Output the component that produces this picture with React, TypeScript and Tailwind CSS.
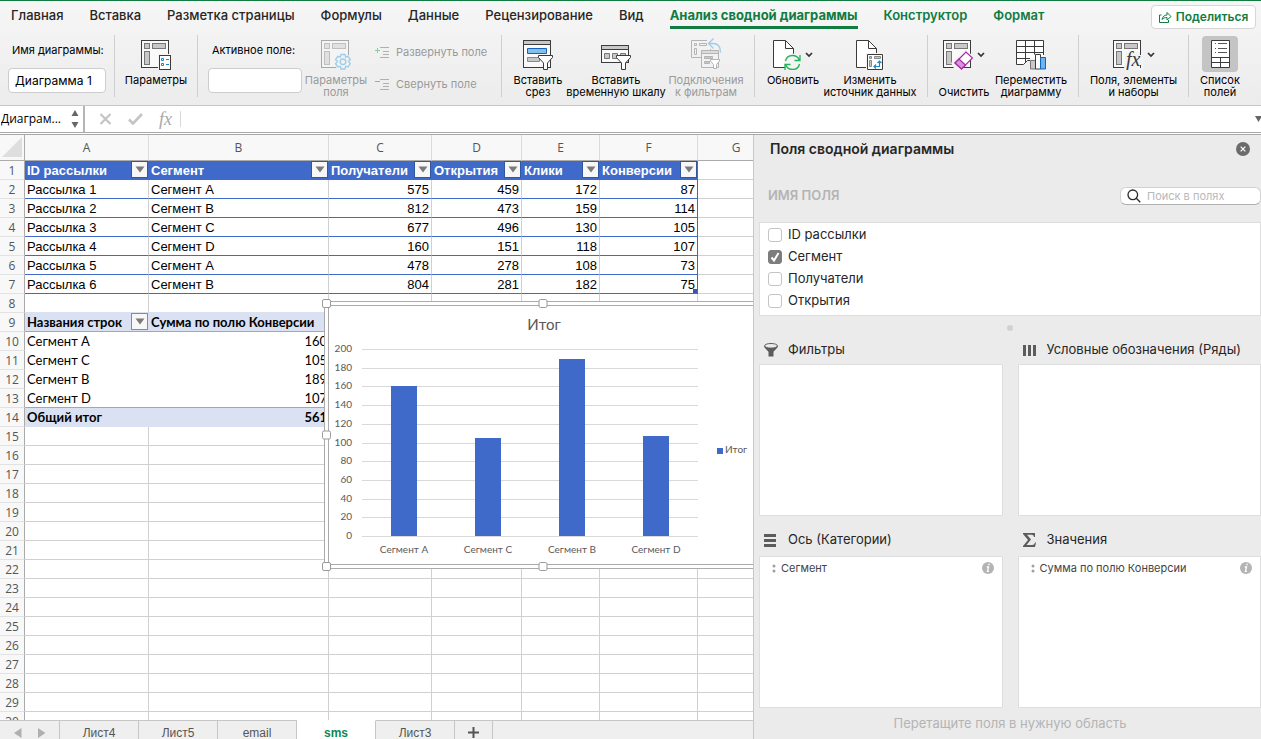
import React, { useState } from 'react';

// --- TYPE DEFINITIONS ---
type IconProps = { className?: string };

type RibbonButtonProps = {
  icon: React.ReactNode;
  lines: string[];
  width: string;
  muted?: boolean;
  menu?: boolean;
  active?: boolean;
};

// --- DATA ---
const menuTabs = ['Главная', 'Вставка', 'Разметка страницы', 'Формулы', 'Данные', 'Рецензирование', 'Вид'];
const contextTabs = ['Анализ сводной диаграммы', 'Конструктор', 'Формат'];

const columns = ['A', 'B', 'C', 'D', 'E', 'F', 'G'];
const headings = ['ID рассылки', 'Сегмент', 'Получатели', 'Открытия', 'Клики', 'Конверсии'];

const mailings = [
  ['Рассылка 1', 'Сегмент A', 575, 459, 172, 87],
  ['Рассылка 2', 'Сегмент B', 812, 473, 159, 114],
  ['Рассылка 3', 'Сегмент C', 677, 496, 130, 105],
  ['Рассылка 4', 'Сегмент D', 160, 151, 118, 107],
  ['Рассылка 5', 'Сегмент A', 478, 278, 108, 73],
  ['Рассылка 6', 'Сегмент B', 804, 281, 182, 75],
];

const pivot = [
  { name: 'Сегмент A', value: 160 },
  { name: 'Сегмент C', value: 105 },
  { name: 'Сегмент B', value: 189 },
  { name: 'Сегмент D', value: 107 },
];

const emptyRows = Array.from({ length: 16 }, (_, i) => i + 15);
const sheets = ['Лист4', 'Лист5', 'email', 'sms', 'Лист3'];
const fields = ['ID рассылки', 'Сегмент', 'Получатели', 'Открытия'];

// --- RIBBON ICONS ---
function PivotBase() {
  return (
    <>
      <rect x="0.5" y="0.5" width="27" height="27" fill="#fafafa" stroke="#3b3b3b" />
      <g fill="#c8c8c8" stroke="#777">
        <rect x="3.5" y="3.5" width="5" height="5" />
        <rect x="11.5" y="3.5" width="13" height="5" />
        <rect x="3.5" y="11.5" width="5" height="13" />
      </g>
    </>
  );
}

function OptionsIcon() {
  return (
    <svg width="30" height="30" viewBox="0 0 30 30" fill="none">
      <PivotBase />
      <path d="M17 14h13v16H17z" fill="#f4f4f4" />
      <rect x="18.5" y="15.5" width="11" height="14" fill="#fff" stroke="#3b3b3b" />
      <path d="M20.5 18.5h2v2h-2zM20.5 23.5h2v2h-2zM25 19.5h3M25 24.5h3" stroke="#1b87c9" />
    </svg>
  );
}

function FieldOptionsIcon() {
  return (
    <svg width="30" height="30" viewBox="0 0 30 30" fill="none">
      <g opacity="0.4">
        <PivotBase />
      </g>
      <circle cx="22" cy="22" r="9" fill="#f1f1f1" />
      <path
        d="M20 14.5h4l.6 2.6 2.2-.8 2.5 3.2-1.8 2 1.8 2.2-2.3 3.2-2.4-.7-.6 2.8h-4l-.8-2.8-2.4.7-2.2-3.2 1.9-2.2-1.9-2 2.2-3.2 2.4.8z"
        stroke="#9dcdea"
        strokeWidth="1.3"
      />
      <circle cx="22" cy="21.8" r="2.8" stroke="#9dcdea" strokeWidth="1.3" />
    </svg>
  );
}

function Funnel() {
  return (
    <path
      d="M15.5 15.5h14v2l-5 5.5v6.500h-4V23l-5-5.500z"
      fill="#fff"
      stroke="#3b3b3b"
      strokeLinejoin="round"
    />
  );
}

function SlicerIcon() {
  return (
    <svg width="30" height="30" viewBox="0 0 30 30" fill="none">
      <rect x="0.5" y="0.5" width="27" height="27" fill="#fafafa" stroke="#3b3b3b" />
      <path d="M.5.5h27v4H.5z" fill="#c8c8c8" stroke="#3b3b3b" />
      <path d="M4.500 8.500h19v5h-19z" fill="#83beec" stroke="#1563b5" />
      <path d="M4.500 17.500h12v4h-12z" fill="#c8c8c8" stroke="#8a8a8a" />
      <Funnel />
    </svg>
  );
}

function TimelineIcon() {
  return (
    <svg width="30" height="30" viewBox="0 0 30 30" fill="none">
      <rect x="0.5" y="5.500" width="27" height="17" fill="#fafafa" stroke="#3b3b3b" />
      <path d="M.5 5.500h27v4H.5z" fill="#c8c8c8" stroke="#3b3b3b" />
      <path d="M3.500 13.500h5v5h-5zM11.500 13.500h5v5h-5zM19.500 13.500h5v3h-5z" fill="#c8c8c8" stroke="#777" />
      <Funnel />
    </svg>
  );
}

function ConnectionsIcon() {
  return (
    <svg className="overflow-visible" width="30" height="30" viewBox="0 0 30 30" fill="none">
      <g stroke="#b4b4b4">
        <path d="M.5.5h19v17H.5zM3.500 3.500h2v2h-2zM8.500 3.500h7v2h-7zM3.500 8.500h2v6h-2z" />
        <path d="M10.500 10.500h17v17h-17z" fill="#f2f2f2" />
        <path d="M10.500 10.500h17v3h-17z" fill="#dcdcdc" />
        <path d="M13.500 16.500h8v2h-8zM13.500 21.500h5v2h-5z" fill="#c8c8c8" />
        <path d="M19.500 19.500h9v1.500l-3 3.500v4h-3v-4l-3-3.500z" fill="#fff" />
      </g>
      <path d="M16 -2h14v11H16z" fill="#f2f2f2" />
      <path d="M18 3.500h4c5 0 7.500 3 7.500 9M22.500-1.500l-5 5 5 5" stroke="#9dcdea" strokeWidth="1.3" />
    </svg>
  );
}

function RefreshIcon() {
  return (
    <svg width="28" height="30" viewBox="0 0 28 30" fill="none">
      <path d="M.5.5h12l8 8v19H.5z" fill="#fff" stroke="#3b3b3b" />
      <path d="M12.500.5v8h8" stroke="#3b3b3b" />
      <circle cx="19.500" cy="22.500" r="9" fill="#f4f4f4" />
      <path
        d="M12.500 21c.8-3.500 3.500-5.500 7-5.500 3 0 5.500 1.500 6.800 4.500M27 15v5.500h-5.500M26.500 24c-.8 3.500-3.500 5.500-7 5.500-3 0-5.500-1.500-6.800-4.500M12 30v-5.500h5.500"
        stroke="#23b35b"
        strokeWidth="1.3"
      />
    </svg>
  );
}

function SourceIcon() {
  return (
    <svg width="28" height="30" viewBox="0 0 28 30" fill="none">
      <path d="M.5.5h12l8 8v19H.5z" fill="#fff" stroke="#3b3b3b" />
      <path d="M12.500.5v8h8" stroke="#3b3b3b" />
      <path d="M10 13h18v17H10z" fill="#f4f4f4" />
      <path d="M11.500 14.500h15v15h-15z" fill="#fff" stroke="#3b3b3b" />
      <path d="M13.500 16.500h2v2h-2zM18.500 16.500h6v2h-6zM13.500 20.500h2v6h-2z" fill="#c8c8c8" stroke="#888" />
      <path d="M18 26.500h5.500V21M20 24.500l-2 2 2 2M21.500 23l2-2 2 2" stroke="#1b87c9" strokeWidth="1.2" />
    </svg>
  );
}

function ClearIcon() {
  return (
    <svg width="30" height="30" viewBox="0 0 30 30" fill="none">
      <PivotBase />
      <path d="M8 23 22 9l8 7-14 14h-4z" fill="#f4f4f4" />
      <path d="m12 23 11-11 6.500 6-11 11z" fill="#fff" stroke="#a626a6" strokeWidth="1.2" />
      <path d="m12 23 4-4 6.500 6-4 4z" fill="#d992dc" stroke="#a626a6" strokeWidth="1.2" />
    </svg>
  );
}

function MoveChartIcon() {
  return (
    <svg width="30" height="30" viewBox="0 0 30 30" fill="none">
      <path d="M.5.5h27v19l-16 1-4 4h-7z" fill="#fff" />
      <path
        d="M27.500 15V.5H.5v24h7l4-4h3M.5 6.500h27M.5 12.500h27M.5 18.500h15M9.500.5v22M18.500.5v14"
        stroke="#3b3b3b"
      />
      <path d="M14 18h5v-5h6v3h5v14H14z" fill="#f4f4f4" />
      <path d="M14.500 20.500h5v8.500h-5z" fill="#c8c8c8" stroke="#777" />
      <path d="M19.500 14.500h5v14.500h-5z" fill="#fff" stroke="#3b3b3b" />
      <path d="M24.500 17.500h5v11.500h-5z" fill="#6fb4ec" stroke="#1563b5" />
    </svg>
  );
}

function FieldsItemsIcon() {
  return (
    <svg width="30" height="30" viewBox="0 0 30 30" fill="none">
      <PivotBase />
      <path d="M12 12h18v18H11z" fill="#f4f4f4" />
      <path d="M27.500 12v3M27.500 25v3" stroke="#3b3b3b" />
      <text x="13" y="26" fontSize="20" fontStyle="italic" fontFamily="Liberation Serif" fill="#3b3b3b">fx</text>
    </svg>
  );
}

function FieldListIcon() {
  return (
    <svg width="19" height="28" viewBox="0 0 19 28" fill="none">
      <path d="M.5.5h18v27H.5z" fill="#fff" stroke="#3b3b3b" />
      <path d="M.5 17.500h18M.5 22.500h18M9.500 17.500v10" stroke="#3b3b3b" />
      <path d="M4 3.500h1M7 3.500h9M4 8.500h1M7 8.500h9M4 12.500h1M7 12.500h9" stroke="#555" />
    </svg>
  );
}

function ExpandIcon({ minus }: { minus?: boolean }) {
  return (
    <svg width="15" height="14" viewBox="0 0 15 14" fill="none">
      <path d="M5 2.500h9M8 6.500h6M8 9.500h6M5 12.500h9" stroke="#b0b0b0" />
      {minus ? <path d="M0 4.500h5" stroke="#f0898b" /> : <path d="M0 5.500h5M2.500 3v5" stroke="#86cf9f" />}
    </svg>
  );
}

function Chevron({ className }: IconProps) {
  return (
    <svg className={className} width="8" height="6" viewBox="0 0 8 6" fill="none">
      <path d="m1 1 3 3 3-3" stroke="#333" strokeWidth="1.7" />
    </svg>
  );
}

// --- RIBBON PARTS ---
function RibbonButton({ icon, lines, width, muted, menu, active }: RibbonButtonProps) {
  return (
    <button className={`flex flex-col items-center pt-px ${width} ${muted ? 'text-[#9a9a9a]' : 'text-black'}`}>
      <span className={`flex h-9 items-start justify-center gap-1 pt-1 ${active ? 'w-9 rounded-sm bg-[#c4c4c4]' : ''}`}>
        {icon}
        {menu && <Chevron className="mt-3" />}
      </span>
      <span className="mt-0.5 flex flex-col text-[11px] leading-3 whitespace-nowrap">
        {lines.map((line, i) => (
          <span key={i} className="min-h-3">{line}</span>
        ))}
      </span>
    </button>
  );
}

function Separator() {
  return <span className="h-[62px] w-px shrink-0 bg-[#cfcfcf]" />;
}

function Ribbon() {
  return (
    <div className="flex h-[75px] shrink-0 items-start overflow-hidden border-b border-[#c6c6c6] pt-1">
      <div className="flex w-[114px] shrink-0 flex-col px-2">
        <label htmlFor="chart-name" className="mt-[7px] mb-2.5 px-1 text-[11px] leading-4 whitespace-nowrap">Имя диаграммы:</label>
        <input
          id="chart-name"
          defaultValue="Диаграмма 1"
          className="h-[25px] w-full rounded-sm border border-[#cdcdcd] bg-white px-1.5 text-[12px] outline-none"
        />
      </div>
      <Separator />
      <RibbonButton width="w-[82px]" icon={<OptionsIcon />} lines={['Параметры']} />
      <Separator />
      <div className="ml-2.5 flex w-[94px] shrink-0 flex-col">
        <label htmlFor="active-field" className="mt-[7px] mb-2.5 px-1 text-[11px] leading-4 whitespace-nowrap">Активное поле:</label>
        <input id="active-field" className="h-[25px] w-full rounded-sm border border-[#cdcdcd] bg-white px-1.5 text-[12px] outline-none" />
      </div>
      <RibbonButton width="w-[68px]" muted icon={<FieldOptionsIcon />} lines={['Параметры', 'поля']} />
      <div className="flex w-[131px] flex-col gap-4 pt-[9px] pl-[5px] text-[11px] leading-4 text-[#9a9a9a]">
        <button className="flex items-center gap-1.5 whitespace-nowrap">
          <ExpandIcon />
          Развернуть поле
        </button>
        <button className="flex items-center gap-1.5 whitespace-nowrap">
          <ExpandIcon minus />
          Свернуть поле
        </button>
      </div>
      <Separator />
      <div className="flex px-2">
        <RibbonButton width="w-14" icon={<SlicerIcon />} lines={['Вставить', 'срез']} />
        <RibbonButton width="w-[100px]" icon={<TimelineIcon />} lines={['Вставить', 'временную шкалу']} />
        <RibbonButton width="w-20" muted icon={<ConnectionsIcon />} lines={['Подключения', 'к фильтрам']} />
      </div>
      <Separator />
      <div className="flex pr-2.5 pl-2">
        <RibbonButton width="w-[60px]" menu icon={<RefreshIcon />} lines={['Обновить']} />
        <RibbonButton width="w-[94px]" icon={<SourceIcon />} lines={['Изменить', 'источник данных']} />
      </div>
      <Separator />
      <div className="flex px-2">
        <RibbonButton width="w-14" menu icon={<ClearIcon />} lines={['', 'Очистить']} />
        <RibbonButton width="w-[78px]" icon={<MoveChartIcon />} lines={['Переместить', 'диаграмму']} />
      </div>
      <Separator />
      <RibbonButton width="w-[109px]" menu icon={<FieldsItemsIcon />} lines={['Поля, элементы', 'и наборы']} />
      <Separator />
      <RibbonButton width="w-[62px]" active icon={<FieldListIcon />} lines={['Список', 'полей']} />
    </div>
  );
}

function FormulaBar() {
  return (
    <div className="shrink-0 border-b border-[#a9a9a9] bg-white pb-px">
      <div className="flex h-[27px] items-center border-b border-[#a9a9a9]">
        <div className="flex h-full w-[85px] items-center border-r-2 border-[#b5b5b5]">
          <input aria-label="Имя ячейки" defaultValue="Диаграм..." className="w-[71px] pl-px font-['Open_Sans',sans-serif] text-[12px] outline-none" />
          <svg width="8" height="20" viewBox="0 0 8 20" fill="#666">
            <path d="M4 1 7.500 7h-7zM4 19 .5 13h7z" />
          </svg>
        </div>
        <div className="flex items-center gap-4 pl-3.5">
          <button aria-label="Отмена">
            <svg width="13" height="12" viewBox="0 0 13 12" fill="none" stroke="#c4c4c4" strokeWidth="2.200">
              <path d="m1.500 1 10 10M11.500 1l-10 10" />
            </svg>
          </button>
          <button aria-label="Ввод">
            <svg width="15" height="12" viewBox="0 0 15 12" fill="none" stroke="#c4c4c4" strokeWidth="2.600">
              <path d="m1 6.500 4 4 9-9.500" />
            </svg>
          </button>
          <button className="font-['Liberation_Serif',serif] text-[18px] leading-5 text-[#a8a8a8] italic">fx</button>
        </div>
        <span className="ml-2 h-4 w-px bg-[#d8d8d8]" />
        <input aria-label="Формула" className="min-w-0 flex-1 px-2 text-[13px] outline-none" />
        <button aria-label="Развернуть строку формул">
          <svg width="6" height="6" viewBox="0 0 6 6" fill="#666">
            <path d="M0 0h7L3.500 6z" />
          </svg>
        </button>
      </div>
    </div>
  );
}

// --- SHEET ---
function FilterButton({ label, dark }: { label: string; dark?: boolean }) {
  return (
    <button
      aria-label={`Фильтр: ${label}`}
      className={`flex size-[17px] shrink-0 items-center justify-center border bg-[#f7f7f7] ${dark ? 'border-[#34569f]' : 'border-[#8a8a8a]'}`}
    >
      <svg width="10" height="7" viewBox="0 0 10 7" fill="#7a7a7a">
        <path d="M.5.5h9L5 6.500z" />
      </svg>
    </button>
  );
}

function RowNumber({ n }: { n: number }) {
  return (
    <th
      scope="row"
      className="h-[19px] border-r border-b border-r-[#ababab] border-b-[#e2e2e2] bg-[#f8f8f8] p-0 pt-px text-center font-['Open_Sans',sans-serif] text-[12px] leading-[17px] font-normal text-[#555]"
    >
      {n}
    </th>
  );
}

function EmptyCells({ count }: { count: number }) {
  return (
    <>
      {Array.from({ length: count }, (_, i) => (
        <td key={i} className="border-r border-b border-[#d0d0d0] p-0" />
      ))}
    </>
  );
}

function Grid() {
  return (
    <table className="w-full min-w-[775px] table-fixed border-separate border-spacing-0 bg-white text-black">
      <colgroup>
        <col className="w-[25px]" />
        <col className="w-[124px]" />
        <col className="w-[180px]" />
        <col className="w-[103px]" />
        <col className="w-[90px]" />
        <col className="w-[78px]" />
        <col className="w-[98px]" />
        <col />
      </colgroup>
      <thead>
        <tr className="bg-[#f8f8f8] font-['Open_Sans',sans-serif] text-[12px] text-[#555]">
          <td className="h-[26px] border-r border-b border-[#ababab] p-0 pr-0.5 pb-0.5">
            <svg className="ml-auto" width="20" height="20" viewBox="0 0 20 20" fill="#dedede">
              <path d="M20 0v20H0z" />
            </svg>
          </td>
          {columns.map((c) => (
            <th key={c} scope="col" className="border-r border-b border-r-[#dcdcdc] border-b-[#ababab] p-0 font-normal">{c}</th>
          ))}
        </tr>
      </thead>
      <tbody className="font-['Liberation_Sans',Arial,sans-serif] text-[13px] leading-[17px]">
        <tr>
          <RowNumber n={1} />
          {headings.map((h) => (
            <td key={h} className="border-b border-[#406ac9] bg-[#406ac9] p-0 font-bold text-white">
              <div className="flex h-[18px] items-start justify-between pr-px pl-0.5">
                <span className="pt-px">{h}</span>
                <FilterButton label={h} dark />
              </div>
            </td>
          ))}
          <EmptyCells count={1} />
        </tr>
        {mailings.map((row, r) => (
          <tr key={r}>
            <RowNumber n={r + 2} />
            {row.map((cell, c) => (
              <td
                key={c}
                className={`relative border-r border-b border-b-[#406ac9] px-0.5 pt-px pb-0 ${c > 1 ? 'text-right' : ''} ${c === 5 ? 'border-r-[#406ac9]' : 'border-r-[#d0d0d0]'}`}
              >
                {cell}
                {r === 5 && c === 5 && <span className="absolute right-0 bottom-0 size-1 bg-[#3b55b5]" />}
              </td>
            ))}
            <EmptyCells count={1} />
          </tr>
        ))}
        <tr>
          <RowNumber n={8} />
          <td className="border-r border-b border-r-[#d0d0d0] border-b-[#d9e1f2] p-0" />
          <td className="border-r border-b border-r-[#d0d0d0] border-b-[#d9e1f2] p-0" />
          <EmptyCells count={5} />
        </tr>
        <tr className="font-['Lato',sans-serif]">
          <RowNumber n={9} />
          <td className="border-b border-[#8ea9db] bg-[#d9e1f2] p-0 font-bold">
            <div className="flex h-[18px] items-start justify-between pr-px pl-0.5 whitespace-nowrap">
              <span className="pt-px">Названия строк</span>
              <FilterButton label="Названия строк" />
            </div>
          </td>
          <td className="border-b border-[#8ea9db] bg-[#d9e1f2] px-0.5 pt-px pb-0 font-bold whitespace-nowrap">Сумма по полю Конверсии</td>
          <EmptyCells count={5} />
        </tr>
        {pivot.map((p, i) => (
          <tr key={p.name} className="font-['Lato',sans-serif]">
            <RowNumber n={i + 10} />
            <td className={`border-b px-0.5 pt-px pb-0 ${i === 3 ? 'border-[#8ea9db]' : 'border-transparent'}`}>{p.name}</td>
            <td className={`border-b px-0.5 pt-px pb-0 text-right ${i === 3 ? 'border-[#8ea9db]' : 'border-transparent'}`}>{p.value}</td>
            <EmptyCells count={5} />
          </tr>
        ))}
        <tr className="font-['Lato',sans-serif] font-bold">
          <RowNumber n={14} />
          <td className="bg-[#d9e1f2] px-0.5 py-px">Общий итог</td>
          <td className="bg-[#d9e1f2] px-0.5 py-px text-right">561</td>
          <EmptyCells count={5} />
        </tr>
        {emptyRows.map((n) => (
          <tr key={n}>
            <RowNumber n={n} />
            <EmptyCells count={7} />
          </tr>
        ))}
      </tbody>
    </table>
  );
}

function Handle({ className }: { className: string }) {
  return <span className={`absolute size-[9px] rounded-xs border border-[#9a9a9a] bg-white ${className}`} />;
}

function Chart() {
  const ticks = Array.from({ length: 11 }, (_, i) => i * 20);
  const y = (v: number) => Math.round(230 - v * 0.935);

  return (
    <figure className="absolute top-[166px] left-[324px] h-[268px] w-[438px] border border-[#ababab] bg-white p-[3px]">
      <svg className="border border-[#ababab]" width="430" height="260" viewBox="0 0 428 258" fontFamily="Lato, sans-serif" fontSize="10" fill="#595959">
        <text x="215" y="24" fontSize="15" textAnchor="middle">Итог</text>
        {ticks.map((t) => (
          <g key={t}>
            <path d={`M33 ${y(t) + 0.5}h336`} stroke="#d9d9d9" />
            <text x="23" y={y(t) + 3} textAnchor="end">{t}</text>
          </g>
        ))}
        {pivot.map((p, i) => (
          <g key={p.name}>
            <rect x={62 + i * 84} y={y(p.value)} width="26" height={230 - y(p.value)} fill="#406ac9" />
            <text x={75 + i * 84} y="247" textAnchor="middle">{p.name}</text>
          </g>
        ))}
        <rect x="388" y="142" width="6" height="6" fill="#406ac9" />
        <text x="396" y="147">Итог</text>
      </svg>
      <Handle className="-top-[3px] -left-[3px]" />
      <Handle className="-top-[3px] left-1/2 -translate-x-1/2" />
      <Handle className="top-1/2 -left-[3px] -translate-y-1/2" />
      <Handle className="-bottom-[3px] -left-[3px]" />
      <Handle className="-bottom-[3px] left-1/2 -translate-x-1/2" />
    </figure>
  );
}

function SheetTabs() {
  const [current, setCurrent] = useState('sms');

  return (
    <div className="h-[19px] shrink-0 overflow-hidden bg-[#efefef]">
      <div className="flex h-6 font-['Liberation_Sans',Arial,sans-serif] text-[12px] text-[#555]">
        <div className="flex w-[60px] items-center justify-center gap-4 border-t border-r border-[#c6c6c6]">
          <button aria-label="Предыдущий лист">
            <svg width="8" height="10" viewBox="0 0 8 10" fill="#b0b0b0"><path d="M7.500 0v10L0 5z" /></svg>
          </button>
          <button aria-label="Следующий лист">
            <svg width="8" height="10" viewBox="0 0 8 10" fill="#b0b0b0"><path d="M0 0v10l7.500-5z" /></svg>
          </button>
        </div>
        {sheets.map((s) => (
          <button
            key={s}
            onClick={() => setCurrent(s)}
            className={`w-[79px] border-t border-r ${s === current ? 'border-t-white border-r-[#c6c6c6] bg-white font-bold text-[#0d8a50]' : 'border-[#c6c6c6]'}`}
          >
            {s}
          </button>
        ))}
        <button aria-label="Добавить лист" className="flex w-[38px] items-center justify-center border-t border-r border-[#c6c6c6]">
          <svg width="11" height="11" viewBox="0 0 11 11" fill="none" stroke="#555" strokeWidth="2"><path d="M5.500 0v11M0 5.500h11" /></svg>
        </button>
        <span className="flex-1 border-t border-[#c6c6c6]" />
      </div>
    </div>
  );
}

// --- FIELD PANEL ---
function AreaHeading({ icon, title, className }: { icon: React.ReactNode; title: string; className: string }) {
  return (
    <h3 className={`flex h-5 items-center text-[13px] text-[#262626] ${className}`}>
      <span className="flex w-[29px] items-center pl-[5px]">{icon}</span>
      {title}
    </h3>
  );
}

function AreaBox({ item }: { item?: string }) {
  return (
    <div className="border border-[#dedede] bg-white">
      {item && (
        <div className="flex h-[22px] items-center pr-2 pl-3 text-[11px] text-[#444]">
          <svg width="5" height="9" viewBox="0 0 5 9" fill="#a0a0a0">
            <circle cx="2" cy="2" r="1.500" />
            <circle cx="2" cy="7" r="1.500" />
          </svg>
          <span className="ml-1 flex-1">{item}</span>
          <button aria-label={`Сведения: ${item}`}>
            <svg width="12" height="12" viewBox="0 0 12 12">
              <circle cx="6" cy="6" r="6" fill="#b4b4b4" />
              <path d="M6.300 2.500h1.400M4.800 5h1.700l-1 4.300h1.400" fill="none" stroke="#fff" strokeWidth="1.300" />
            </svg>
          </button>
        </div>
      )}
    </div>
  );
}

function FieldPanel() {
  const [checked, setChecked] = useState<string[]>(['Сегмент']);

  const toggle = (f: string) =>
    setChecked((prev) => (prev.includes(f) ? prev.filter((x) => x !== f) : [...prev, f]));

  return (
    <aside className="flex w-[508px] shrink-0 flex-col border-l border-[#c8c8c8] bg-[#ebebeb] pl-[5px]">
      <div className="flex h-7 items-center justify-between pr-[11px] pl-[11px]">
        <h2 className="text-[14px] leading-4 font-semibold text-[#262626]">Поля сводной диаграммы</h2>
        <button aria-label="Закрыть">
          <svg width="14" height="14" viewBox="0 0 15 15" fill="none">
            <circle cx="7.500" cy="7.500" r="7.500" fill="#6b6b6b" />
            <path d="m5 5 5 5M10 5l-5 5" stroke="#fff" strokeWidth="1.300" />
          </svg>
        </button>
      </div>

      <div className="mt-6 flex h-[18px] items-center justify-between pl-[9px]">
        <h3 className="text-[13px] font-semibold text-[#b4b4b4]">ИМЯ ПОЛЯ</h3>
        <label className="flex h-[18px] w-[141px] items-center rounded-md border border-[#d2d2d2] border-b-[#b0b0b0] bg-white pl-1.5">
          <svg className="shrink-0" width="14" height="14" viewBox="0 0 14 14" fill="none" stroke="#2b2b2b" strokeWidth="1.300">
            <circle cx="5.800" cy="5.800" r="4.800" />
            <path d="m9.300 9.300 4 4" />
          </svg>
          <input
            type="search"
            aria-label="Поиск в полях"
            placeholder="Поиск в полях"
            className="ml-1.5 w-full min-w-0 text-[11px] outline-none placeholder:text-[#b8b8b8]"
          />
        </label>
      </div>

      <div className="mt-[17px] border border-[#dedede] bg-white pt-px pb-[3px] pl-2">
        {fields.map((f) => (
          <label key={f} className="flex h-[22px] items-center gap-1.5 text-[13px] text-[#262626]">
            <span className="relative flex">
              <input
                type="checkbox"
                checked={checked.includes(f)}
                onChange={() => toggle(f)}
                className="size-3.5 appearance-none rounded-[3px] border border-[#c4c4c4] bg-white checked:border-[#7d7d7d] checked:bg-[#7d7d7d]"
              />
              {checked.includes(f) && (
                <svg className="pointer-events-none absolute inset-0" width="14" height="14" viewBox="0 0 14 14" fill="none">
                  <path d="m3.500 7.500 2.500 3 4.500-7.500" stroke="#fff" strokeWidth="2" />
                </svg>
              )}
            </span>
            {f}
          </label>
        ))}
      </div>

      <div className="flex h-6 items-center justify-center">
        <span className="size-1.5 rounded-full bg-[#d2d2d2]" />
      </div>

      <div className="grid flex-1 grid-cols-2 grid-rows-[24px_minmax(0,1fr)_40px_minmax(0,1fr)] gap-x-[15px]">
        <AreaHeading
          className="self-start"
          title="Фильтры"
          icon={
            <svg width="14" height="14" viewBox="0 0 14 14" fill="#5c5c5c">
              <path d="M0 3c0 2 4.500 5 4.500 6v4.500h5V9c0-1 4.500-4 4.500-6z" />
              <ellipse cx="7" cy="2.800" rx="6.400" ry="2.300" fill="#ebebeb" stroke="#5c5c5c" />
            </svg>
          }
        />
        <AreaHeading
          className="self-start"
          title="Условные обозначения (Ряды)"
          icon={
            <svg width="13" height="11" viewBox="0 0 13 11" fill="#5c5c5c">
              <path d="M0 0h3v11H0zM5 0h3v11H5zM10 0h3v11h-3z" />
            </svg>
          }
        />
        <AreaBox />
        <AreaBox />
        <AreaHeading
          className="mb-1.5 self-end"
          title="Ось (Категории)"
          icon={
            <svg width="12" height="13" viewBox="0 0 12 13" fill="#5c5c5c">
              <path d="M0 0h12v3H0zM0 5h12v3H0zM0 10h12v3H0z" />
            </svg>
          }
        />
        <AreaHeading
          className="mb-1.5 self-end"
          title="Значения"
          icon={
            <svg width="13" height="14" viewBox="0 0 13 14" fill="#5c5c5c">
              <path d="M0 0h12v4h-1c-.3-1.500-1-2.200-2.500-2.200H4L8 6.500 3.500 12h5.700c1.500 0 2.200-.8 2.800-2.500h1L12 14H0v-1l5-6L0 1z" />
            </svg>
          }
        />
        <AreaBox item="Сегмент" />
        <AreaBox item="Сумма по полю Конверсии" />
      </div>

      <p className="flex h-[31px] items-center justify-center pt-px text-[13px] text-[#b4b4b4]">Перетащите поля в нужную область</p>
    </aside>
  );
}

export default function App() {
  return (
    <main className="flex h-screen flex-col overflow-hidden bg-white font-['Inter',sans-serif] text-black">
      <div className="shrink-0 border-t border-[#107c41] bg-linear-to-b from-[#f6f6f6] to-[#ececec]">
        {/* Menu */}
        <nav className="flex h-[30px] items-start justify-between pr-[5px] pl-[11px]">
          <div className="flex gap-[26px] text-[13px] font-medium whitespace-nowrap text-[#262626]">
            {menuTabs.map((t) => (
              <button key={t} className="h-7 border-b-3 border-transparent pt-1">{t}</button>
            ))}
            {contextTabs.map((t, i) => (
              <button
                key={t}
                className={`h-7 border-b-3 pt-1 text-[#107c41] ${i === 0 ? 'border-[#107c41] font-bold' : 'border-transparent font-semibold'}`}
              >
                {t}
              </button>
            ))}
          </div>
          <button className="mt-1 flex h-6 w-[105px] items-center justify-center gap-1 rounded-sm border border-[#d6d6d6] bg-white text-[12px] font-semibold text-[#107c41]">
            <svg width="13" height="12" viewBox="0 0 13 12" fill="none" stroke="#107c41">
              <path d="M2.500 4H.5v7.500h9V9" />
              <path d="M3 8.500c.5-3 2.500-4.500 5-4.500V1.500l4 4-4 3.500V6.500c-2.200 0-3.800.5-5 2z" strokeLinejoin="round" />
            </svg>
            Поделиться
          </button>
        </nav>
        <Ribbon />
      </div>

      <FormulaBar />

      <div className="flex min-h-0 flex-1">
        <section className="flex min-w-0 flex-1 flex-col">
          <div className="relative min-h-0 flex-1 overflow-hidden">
            <Grid />
            <Chart />
          </div>
          <SheetTabs />
        </section>
        <FieldPanel />
      </div>
    </main>
  );
}
